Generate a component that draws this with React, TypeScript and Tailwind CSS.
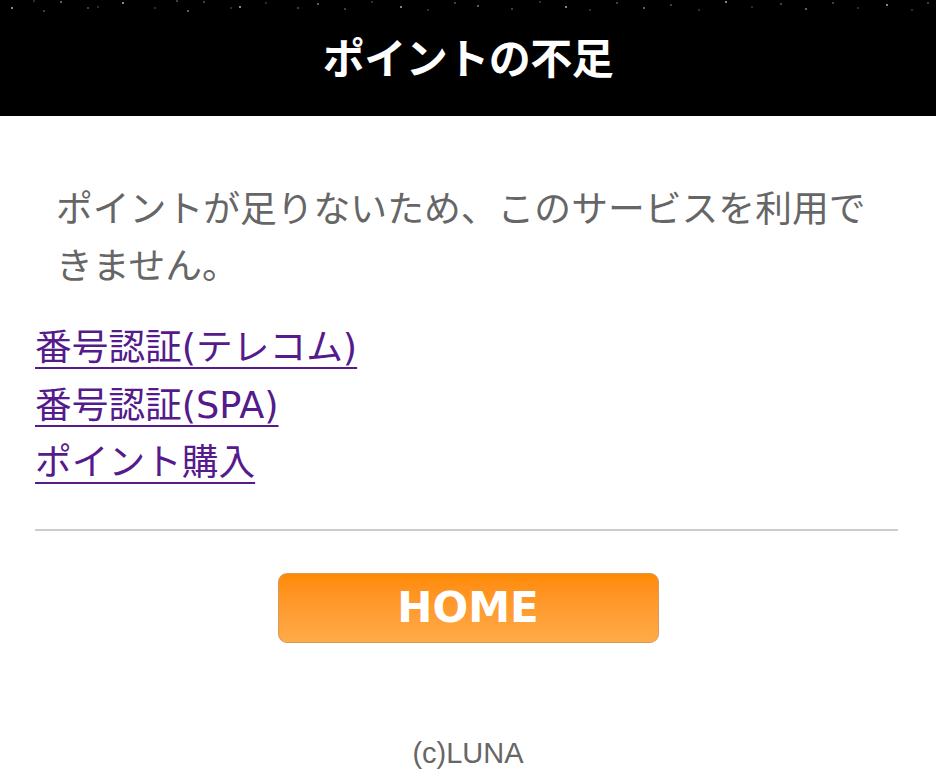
const stars = [
  [12, 7], [34, 0], [44, 10], [61, 1], [88, 7], [98, 6], [123, 2], [155, 7], [177, 0], [188, 10], [204, 1], [231, 7], [240, 6], [266, 2], [298, 7],
  [318, 3], [345, 8], [372, 1], [401, 6], [428, 9], [455, 2], [478, 5], [512, 8], [540, 1], [566, 6], [590, 9], [617, 2], [644, 7], [671, 4],
  [699, 9], [726, 1], [752, 6], [781, 3], [806, 8], [833, 2], [858, 7], [887, 4], [912, 9], [928, 2],
];

function Header() {
  return (
    <header className="relative h-[116px] bg-black flex items-center justify-center">
      <svg className="absolute left-0 top-0" width="936" height="14" viewBox="0 0 936 14">
        {stars.map(([x, y], i) => (
          <circle key={i} cx={x} cy={y + 1} r={i % 3 === 0 ? 1 : 0.7} fill="#cfcfcf" opacity={i % 2 ? 0.6 : 0.85} />
        ))}
      </svg>
      <h1 className="text-[42px] font-bold text-white leading-none tracking-[-0.5px] pt-[4px]">ポイントの不足</h1>
    </header>
  );
}

export default function App() {
  const links = ['番号認証(テレコム)', '番号認証(SPA)', 'ポイント購入'];

  return (
    <div
      className="w-[936px] min-h-[783px] bg-white"
      style={{ fontFamily: '"DejaVu Sans", "Noto Sans CJK JP", sans-serif' }}
    >
      <Header />

      <div className="px-[35px]">
        <p className="mt-[65px] pl-[21px] pr-[16px] text-[36.8px] leading-[57px] text-[#666666]">
          ポイントが足りないため、このサービスを利用できません。
        </p>

        <ul className="mt-[24px] flex flex-col">
          {links.map((label) => (
            <li key={label} className="text-[36.7px] leading-[57.5px]">
              <a href="#" className="text-[#551a8b] underline underline-offset-[7px] decoration-[2px]">
                {label}
              </a>
            </li>
          ))}
        </ul>

        <hr className="mt-[37px] mr-[3px] border-0 h-[2px] bg-[#cccccc]" />

        <div className="mt-[42px] flex justify-center">
          <button className="w-[381px] h-[70px] rounded-[9px] border border-[#d69a5c] bg-gradient-to-b from-[#ff8a00] to-[#ffab47] flex items-center justify-center">
            <span className="text-[42px] font-bold text-white leading-none pt-[1px]">HOME</span>
          </button>
        </div>

        <p
          className="mt-[89px] text-center text-[29px] text-[#666666]"
          style={{ fontFamily: '"Liberation Sans", Arial, sans-serif' }}
        >
          (c)LUNA
        </p>
      </div>
    </div>
  );
}
